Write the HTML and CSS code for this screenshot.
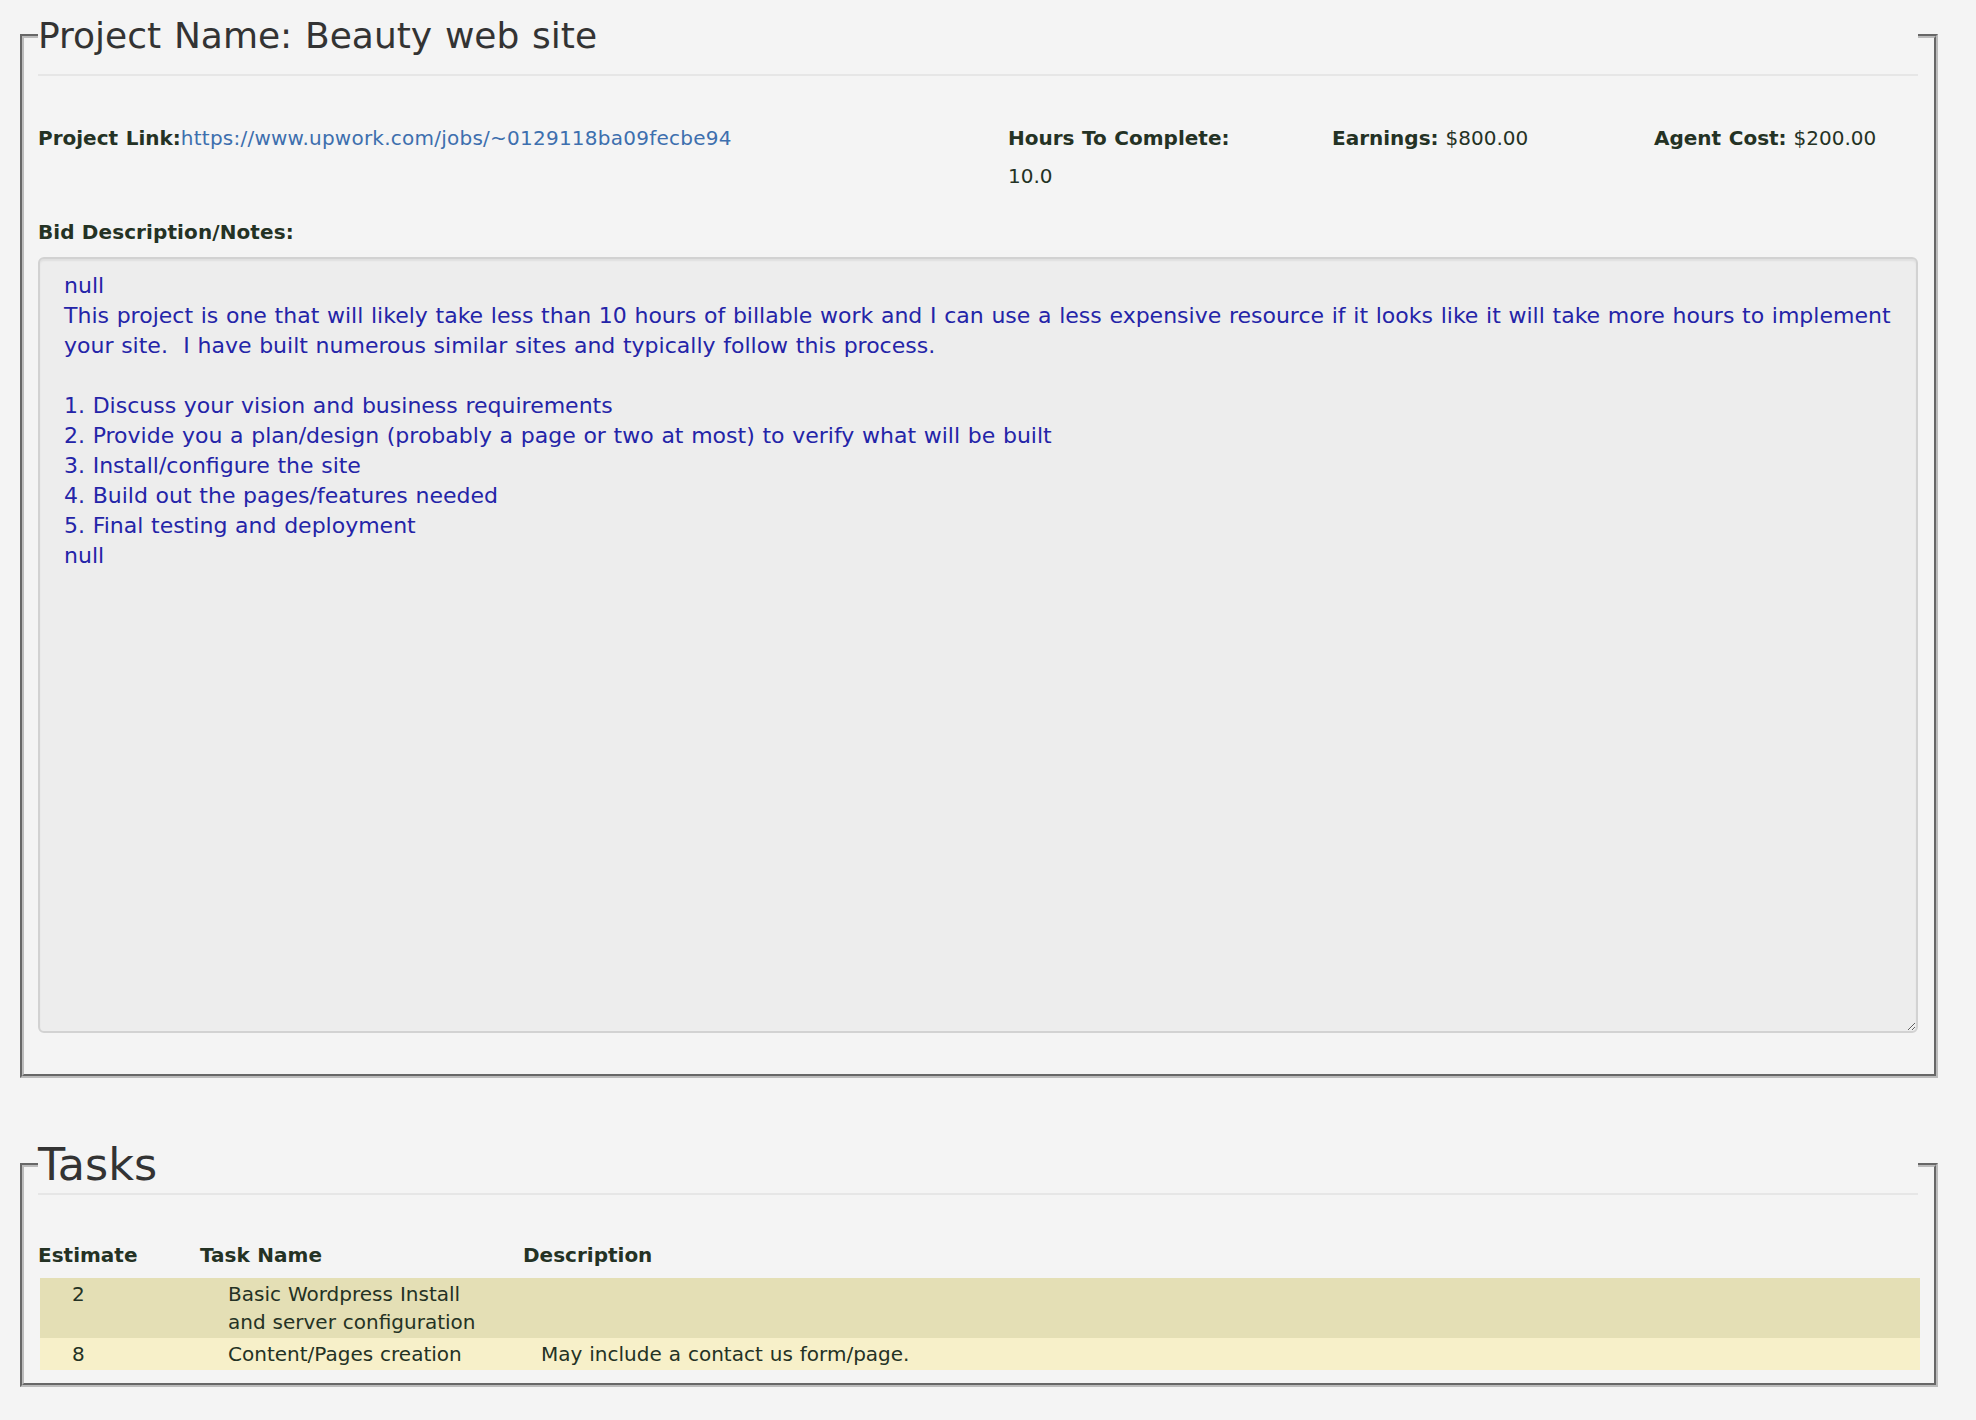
FILE: index.html
```html
<!DOCTYPE html>
<html lang="en">
<head>
<meta charset="utf-8">
<title>Project: Beauty web site</title>
<link rel="stylesheet" href="styles.css">
</head>
<body>
<div class="page">
  <fieldset class="panel panel-project">
    <legend class="panel-title">Project Name: Beauty web site</legend>
    <hr class="rule rule-project">
    <div class="info-row">
      <div class="info-cell"><span class="lbl">Project Link:</span><a class="link" href="#">https://www.upwork.com/jobs/~0129118ba09fecbe94</a></div>
      <div class="info-cell"><span class="lbl">Hours To Complete:</span> 10.0</div>
      <div class="info-cell"><span class="lbl">Earnings:</span> $800.00</div>
      <div class="info-cell"><span class="lbl">Agent Cost:</span> $200.00</div>
    </div>
    <div class="lbl notes-label">Bid Description/Notes:</div>
    <textarea class="notes" wrap="off">null
This project is one that will likely take less than 10 hours of billable work and I can use a less expensive resource if it looks like it will take more hours to implement
your site.  I have built numerous similar sites and typically follow this process.

1. Discuss your vision and business requirements
2. Provide you a plan/design (probably a page or two at most) to verify what will be built
3. Install/configure the site
4. Build out the pages/features needed
5. Final testing and deployment
null</textarea>
  </fieldset>

  <fieldset class="panel panel-tasks">
    <legend class="panel-title tasks-title">Tasks</legend>
    <hr class="rule rule-tasks">
    <table class="tasks">
      <thead>
        <tr>
          <th class="c-est">Estimate</th>
          <th class="c-name">Task Name</th>
          <th class="c-desc">Description</th>
        </tr>
      </thead>
      <tbody>
        <tr class="row-a">
          <td class="c-est">2</td>
          <td class="c-name">Basic Wordpress Install and server configuration</td>
          <td class="c-desc"></td>
        </tr>
        <tr class="row-b">
          <td class="c-est">8</td>
          <td class="c-name">Content/Pages creation</td>
          <td class="c-desc">May include a contact us form/page.</td>
        </tr>
      </tbody>
    </table>
  </fieldset>
</div>
</body>
</html>
```

FILE: styles.css
```css
* { box-sizing: border-box; }

html, body {
  margin: 0;
  padding: 0;
  background: #f4f4f4;
}

body {
  font-family: "DejaVu Sans", Verdana, sans-serif;
  font-size: 20px;
  color: #243224;
}

.page {
  padding: 11px 38px 0 20px;
}

.panel {
  margin: 0;
  min-width: 0;
  border: 4px groove #bbbbbb;
  padding: 0 16px 41px 14px;
}

.panel-title {
  display: block;
  width: 100%;
  padding: 0;
  font-size: 36px;
  line-height: 50px;
  word-spacing: 1.3px;
  font-weight: normal;
  color: #333333;
}

.rule {
  height: 0;
  margin: 0;
  border: 0;
  border-top: 2px solid #e6e6e6;
}

.rule-project { margin-top: 13px; }

.info-row {
  display: grid;
  grid-template-columns: 970px 324px 322px 1fr;
  margin-top: 43px;
  line-height: 38px;
  word-spacing: 0.6px;
}

.info-cell {
  padding-right: 56px;
}

.info-cell:last-child { padding-right: 0; }

.lbl {
  font-weight: bold;
  color: #243224;
}

.link {
  color: #3d6fae;
  text-decoration: none;
  letter-spacing: 0.24px;
}

.notes-label {
  margin-top: 22px;
  line-height: 30px;
  letter-spacing: 0.1px;
}

.notes {
  display: block;
  width: 100%;
  height: 776px;
  margin-top: 10px;
  padding: 12px 24px;
  border: 2px solid #d2d2d2;
  border-radius: 6px;
  background: #ededed;
  box-shadow: inset 0 2px 2px rgba(0, 0, 0, 0.06);
  font-family: "DejaVu Sans", Verdana, sans-serif;
  font-size: 22px;
  line-height: 30px;
  word-spacing: 0.7px;
  color: #2424a8;
  overflow: hidden;
  white-space: pre;
  resize: vertical;
}

.panel-tasks {
  margin-top: 62px;
  padding-bottom: 13px;
}

.tasks-title {
  font-size: 44.5px;
}

.rule-tasks { margin-top: 3px; }

.tasks {
  width: 100%;
  margin: 44px 0 0 2px;
  border-collapse: collapse;
  table-layout: fixed;
  font-size: 20px;
  line-height: 28px;
  word-spacing: 0.6px;
  color: #243224;
}

.tasks th {
  text-align: left;
  font-weight: bold;
  padding: 2px 0 9px 0;
}

.tasks th.c-est { width: 160px; text-indent: -2px; }
.tasks th.c-name { width: 323px; }

.tasks td {
  padding: 2px 0;
  vertical-align: top;
}

.tasks td.c-est { padding-left: 32px; }
.tasks td.c-name { padding-left: 28px; padding-right: 30px; }
.tasks td.c-desc { padding-left: 18px; }

.row-a { background: #e4dfb5; }
.row-b { background: #f7f0c9; }
```
